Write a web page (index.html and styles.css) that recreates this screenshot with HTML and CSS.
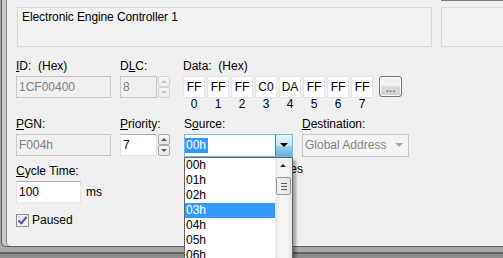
FILE: index.html
```html
<!DOCTYPE html>
<html lang="en">
<head>
<meta charset="UTF-8">
<title>Transmit Message</title>
<link rel="stylesheet" href="styles.css">
</head>
<body>

<div class="window">
  <div class="panel">

    <!-- Comment / side boxes -->
    <div class="top">
      <div class="namebox">Electronic Engine Controller 1</div>
      <div class="side"><div class="sidebox"></div></div>
    </div>

    <!-- ID, DLC, Data -->
    <div class="row row-a">
      <div class="field f-id">
        <label><u>I</u>D:&nbsp; (Hex)</label>
        <div class="edit disabled">1CF00400</div>
      </div>
      <div class="field f-small">
        <label>D<u>L</u>C:</label>
        <div class="spin-wrap">
          <div class="edit disabled narrow">8</div>
          <div class="spin disabled"><span class="up"></span><span class="down"></span></div>
        </div>
      </div>
      <div class="field f-data">
        <label>Data:&nbsp; (Hex)</label>
        <div class="cells">
          <div class="cell"><span class="byte">FF</span><span class="idx">0</span></div>
          <div class="cell"><span class="byte">FF</span><span class="idx">1</span></div>
          <div class="cell"><span class="byte">FF</span><span class="idx">2</span></div>
          <div class="cell"><span class="byte">C0</span><span class="idx">3</span></div>
          <div class="cell"><span class="byte">DA</span><span class="idx">4</span></div>
          <div class="cell"><span class="byte">FF</span><span class="idx">5</span></div>
          <div class="cell"><span class="byte">FF</span><span class="idx">6</span></div>
          <div class="cell"><span class="byte">FF</span><span class="idx">7</span></div>
        </div>
      </div>
      <button class="more">...</button>
    </div>

    <!-- PGN, Priority, Source, Destination -->
    <div class="row row-b">
      <div class="field f-id">
        <label><u>P</u>GN:</label>
        <div class="edit disabled">F004h</div>
      </div>
      <div class="field f-small">
        <label><u>P</u>riority:</label>
        <div class="spin-wrap">
          <div class="edit narrow">7</div>
          <div class="spin"><span class="up"></span><span class="down"></span></div>
        </div>
      </div>
      <div class="field f-source">
        <label>S<u>o</u>urce:</label>
        <div class="combo open">
          <div class="combo-text"><span class="sel">00h</span></div>
          <div class="combo-btn"><span class="arrow"></span></div>
          <div class="droplist">
            <div class="items">
              <div class="item">00h</div>
              <div class="item">01h</div>
              <div class="item">02h</div>
              <div class="item active">03h</div>
              <div class="item">04h</div>
              <div class="item">05h</div>
              <div class="item">06h</div>
              <div class="item">07h</div>
            </div>
            <div class="vscroll">
              <span class="sarrow"></span>
              <span class="thumb"><i></i><i></i><i></i></span>
            </div>
          </div>
        </div>
      </div>
      <div class="field f-dest">
        <label><u>D</u>estination:</label>
        <div class="combo disabled">
          <div class="combo-text">Global Address</div>
          <div class="combo-btn"><span class="arrow"></span></div>
        </div>
      </div>
    </div>

    <!-- Cycle time -->
    <div class="row row-c">
      <div class="field f-cycle">
        <label><u>C</u>ycle Time:</label>
        <div class="inline">
          <div class="edit cycle">100</div>
          <span class="unit">ms</span>
        </div>
      </div>
      <div class="hidden-opt">Multiple Frames</div>
    </div>

    <div class="row row-d">
      <span class="check"></span>
      <span class="check-label">Paused</span>
    </div>

  </div>
  <div class="frame-bottom"></div>
</div>

</body>
</html>
```

FILE: styles.css
```css
  /* Page */
  body {
    margin: 0;
    width: 503px;
    height: 258px;
    overflow: hidden;
    font-family: "Liberation Sans", Arial, sans-serif;
    font-size: 12px;
    color: #000;
  }

  /* Window frame */
  .window {
    height: 258px;
    display: flex;
    flex-direction: column;
    background-color: #a6a6a6;
  }

  .panel {
    height: 247px;
    box-sizing: border-box;
    margin-left: 1px;
    padding-left: 14px;
    background-color: #f0f0f0;
    border-left: 1px solid #5c5c5c;
    border-bottom: 1px solid #5c5c5c;
    border-bottom-left-radius: 5px;
    box-shadow: inset 4px 0 0 #c9c9c9, inset 5px 0 0 #8a8a8a;
    position: relative;
  }

  .frame-bottom {
    flex: 1;
    background: linear-gradient(#a9a9a9 0 5px, #636363 5px 7px, #8e8e8e 7px);
  }

  /* Top boxes */
  .top {
    display: flex;
    height: 47px;
  }

  .namebox {
    width: 415px;
    height: 40px;
    box-sizing: border-box;
    margin: 7px 0 0 1px;
    padding: 2px 4px;
    line-height: 15px;
    letter-spacing: -0.1px;
    border: 1px solid #d7d9db;
    background-color: #f2f2f2;
  }

  .side {
    flex: 1;
    margin-left: 9px;
    padding-top: 6px;
    border-top: 1px solid #7b7b7b;
  }

  .sidebox {
    height: 40px;
    box-sizing: border-box;
    border: 1px solid #d7d9db;
    border-right: none;
    background-color: #f2f2f2;
  }

  /* Rows */
  .row {
    display: flex;
    align-items: flex-start;
  }

  .row-a { margin-top: 12px; height: 58px; }
  .row-b { height: 47px; }
  .row-c { height: 48px; }
  .row-d { align-items: center; height: 17px; }

  .field {
    display: flex;
    flex-direction: column;
  }

  .field label {
    display: block;
    height: 15px;
    line-height: 15px;
    margin-bottom: 2px;
    white-space: pre;
  }

  .f-id { width: 95px; }
  .f-small { width: 50px; margin-left: 9px; }
  .f-data { margin-left: 13px; }
  .f-source { width: 109px; margin-left: 14px; position: relative; }
  .f-dest { width: 107px; margin-left: 9px; }
  .f-cycle { width: 168px; }

  /* Text boxes */
  .edit {
    height: 22px;
    box-sizing: border-box;
    padding: 0 2px;
    line-height: 20px;
    border: 1px solid #e2e3ea;
    border-top-color: #abadb3;
    border-bottom-color: #e3e9ef;
    background-color: #fff;
  }

  .edit.disabled {
    color: #7f7f7f;
    background-color: #f0f0f0;
    border-color: #c5c7ca;
  }

  .edit.narrow { width: 37px; }
  .edit.cycle { width: 65px; }

  .inline {
    display: flex;
    align-items: center;
  }

  .unit { margin-left: 5px; }

  /* Up-down control */
  .spin-wrap {
    display: flex;
    gap: 1px;
  }

  .spin {
    display: flex;
    flex-direction: column;
    width: 12px;
    height: 22px;
  }

  .spin span {
    flex: 1;
    position: relative;
    border: 1px solid #a8adb3;
    border-radius: 2px;
    background: linear-gradient(#f7f7f7, #e3e5e8);
  }

  .spin span::after {
    content: "";
    position: absolute;
    left: 2px;
    top: 3px;
    border-left: 3px solid transparent;
    border-right: 3px solid transparent;
  }

  .spin .up::after { border-bottom: 3px solid #4f5b6a; }
  .spin .down::after { border-top: 3px solid #4f5b6a; }

  .spin.disabled span {
    border-color: #d4d6d8;
    background: linear-gradient(#f6f6f6, #eeeeee);
  }

  .spin.disabled .up::after { border-bottom-color: #bfc3c7; }
  .spin.disabled .down::after { border-top-color: #bfc3c7; }

  /* Data bytes */
  .cells {
    display: grid;
    grid-template-columns: repeat(8, 22px);
    column-gap: 2px;
  }

  .cell {
    display: flex;
    flex-direction: column;
    align-items: center;
  }

  .byte {
    width: 22px;
    height: 22px;
    box-sizing: border-box;
    line-height: 20px;
    text-align: center;
    border: 1px solid #e4e4e4;
    background-color: #fff;
  }

  .idx {
    line-height: 13px;
  }

  /* Ellipsis button */
  .more {
    width: 23px;
    height: 21px;
    margin: 17px 0 0 6px;
    padding: 0;
    font-family: inherit;
    font-size: 12px;
    line-height: 22px;
    color: #3a3a6a;
    border: 1px solid #707070;
    border-radius: 3px;
    background: linear-gradient(#f2f2f2 0 50%, #dddddd 50%, #cfcfcf);
    box-shadow: inset 0 0 0 1px #fbfbfb;
  }

  /* Combo boxes */
  .combo {
    display: flex;
    height: 23px;
    box-sizing: border-box;
    border: 1px solid #7eb4ea;
    background-color: #fff;
    position: relative;
  }

  .combo-text {
    flex: 1;
    line-height: 21px;
    white-space: nowrap;
    overflow: hidden;
  }

  .sel {
    display: inline-block;
    line-height: 15px;
    padding: 0 2px 0 1px;
    color: #fff;
    background-color: #3399ff;
  }

  .combo-btn {
    width: 16px;
    position: relative;
    border-left: 1px solid #3c7fb1;
    background: linear-gradient(#e5f4fc, #c4e5f6 50%, #98d1ef 50%, #68b3db);
  }

  .arrow {
    position: absolute;
    left: 4px;
    top: 8px;
    border-left: 4px solid transparent;
    border-right: 4px solid transparent;
    border-top: 4px solid #000;
  }

  .combo.disabled {
    border-color: #c4c6c9;
    background-color: #f4f4f4;
    color: #838383;
  }

  .combo.disabled .combo-text { padding-left: 2px; }

  .combo.disabled .combo-btn {
    border-left: none;
    background: none;
  }

  .combo.disabled .arrow {
    left: 3px;
    border-top-color: #a9a9a9;
  }

  /* Open drop-down list */
  .droplist {
    position: absolute;
    top: 22px;
    left: -1px;
    width: 109px;
    height: 110px;
    box-sizing: border-box;
    display: flex;
    border: 1px solid #646464;
    background-color: #fff;
    box-shadow: 3px 3px 3px rgba(0, 0, 0, 0.35);
    z-index: 5;
  }

  .items {
    flex: 1;
  }

  .item {
    height: 15px;
    line-height: 15px;
    padding-left: 1px;
  }

  .item.active {
    color: #fff;
    background-color: #3399ff;
  }

  .vscroll {
    width: 17px;
    position: relative;
    background: linear-gradient(90deg, #e6e6e6, #f4f4f4 30%, #f4f4f4 70%, #e6e6e6);
  }

  .sarrow {
    position: absolute;
    left: 5px;
    top: 6px;
    border-left: 3px solid transparent;
    border-right: 3px solid transparent;
    border-bottom: 3px solid #2b2b2b;
  }

  .thumb {
    position: absolute;
    left: 1px;
    top: 19px;
    width: 15px;
    height: 18px;
    box-sizing: border-box;
    display: flex;
    flex-direction: column;
    justify-content: center;
    align-items: center;
    gap: 2px;
    border: 1px solid #979797;
    border-radius: 2px;
    background: linear-gradient(90deg, #f3f3f3, #e4e4e4);
  }

  .thumb i {
    display: block;
    width: 6px;
    height: 1px;
    background-color: #5a5a5a;
  }

  /* Option hidden under the list */
  .hidden-opt {
    width: 119px;
    margin-top: -2px;
    line-height: 15px;
    text-align: right;
    white-space: nowrap;
  }

  /* Check box */
  .check {
    width: 13px;
    height: 13px;
    box-sizing: border-box;
    position: relative;
    border: 1px solid #8e8f8f;
    background: linear-gradient(135deg, #dcdcdc, #f6f6f6);
    box-shadow: inset 0 0 0 1px #f4f4f4;
  }

  .check::after {
    content: "";
    position: absolute;
    left: 3px;
    top: 0px;
    width: 3px;
    height: 7px;
    border: solid #4a5f97;
    border-width: 0 2px 2px 0;
    transform: rotate(40deg);
  }

  .check-label {
    margin-left: 3px;
    line-height: 15px;
  }
```
